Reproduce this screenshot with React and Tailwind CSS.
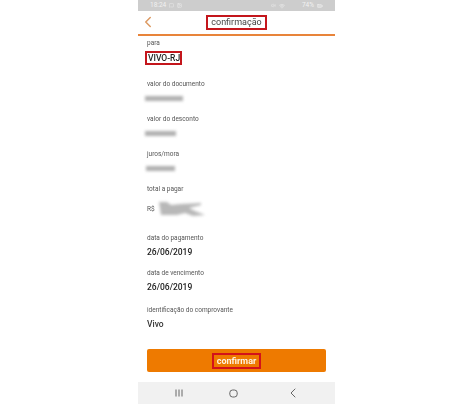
import React from 'react'
import { ChevronLeft, Wifi, Image, MessageSquare, VolumeX, BatteryFull } from 'lucide-react'

function Label({ children }) {
  return <p className="text-[6.5px] leading-[10px] text-[#555]">{children}</p>
}

function Hidden({ w, className = '' }) {
  return <div className={`${w} h-[5px] ${className} bg-[#b0b0b0] blur-[1.5px]`} />
}

function Field({ label, mt, children }) {
  return (
    <div className={mt}>
      <Label>{label}</Label>
      {children}
    </div>
  )
}

export default function App() {
  return (
    <div className="w-[474px] h-[405px] bg-white overflow-hidden font-['Roboto',sans-serif]">
      <div className="ml-[138px] w-[197px] h-[405px] flex flex-col blur-[0.3px]">
        {/* status bar */}
        <div className="h-[11px] bg-[#cdcdcd] flex items-center justify-between pl-[12px] pr-[12px] text-[6.5px] text-[#f2f2f2]">
          <div className="flex items-center gap-[3px]">
            <span>18:24</span>
            <MessageSquare className="w-[5px] h-[5px]" />
            <Image className="w-[5px] h-[5px]" />
          </div>
          <div className="flex items-center gap-[3px]">
            <VolumeX className="w-[5px] h-[5px]" />
            <Wifi className="w-[6px] h-[6px]" />
            <span className="ml-[14px]">74%</span>
            <BatteryFull className="w-[6px] h-[6px]" />
          </div>
        </div>

        {/* header */}
        <div className="h-[25px] border-b-2 border-[#e8843a] flex items-center justify-center relative">
          <ChevronLeft className="absolute left-[1px] top-[2px] w-[18px] h-[18px] text-[#dd9a62]" strokeWidth={2} />
          <span className="border-2 border-[#c4161c] text-[9px] leading-[11px] text-[#444] px-[3px]">confirmação</span>
        </div>

        {/* fields */}
        <div className="flex-1 pl-[9px] pt-[2px]">
          <Label>para</Label>
          <div className="mt-[3px] -ml-[2px] w-fit border-2 border-[#c4161c] text-[8.5px] leading-[10px] font-medium text-[#222] pl-px">VIVO-RJ</div>

          <Field label="valor do documento" mt="mt-[14px]">
            <Hidden w="w-[38px]" className="mt-[7px] -ml-[2px]" />
          </Field>
          <Field label="valor do desconto" mt="mt-[13px]">
            <Hidden w="w-[31px]" className="mt-[7px] -ml-[2px]" />
          </Field>
          <Field label="juros/mora" mt="mt-[13px]">
            <Hidden w="w-[29px]" className="mt-[7px] -ml-[1px]" />
          </Field>
          <Field label="total a pagar" mt="mt-[13px]">
            <div className="mt-[7px] flex items-center gap-[1px]">
              <span className="text-[6.5px] leading-[10px] text-[#555]">R$</span>
              <svg width="50" height="16" viewBox="0 0 50 16" className="blur-[1.5px]">
                <path d="M3 1h8l4 3 10-1 20-1v2l-12 3 6 3 10 4-12 1-8-3-8 2-16 0z" fill="#b8b8b8" />
              </svg>
            </div>
          </Field>
          <Field label="data do pagamento" mt="mt-[16px]">
            <p className="mt-[3px] text-[8.5px] leading-[12px] font-medium text-[#222]">26/06/2019</p>
          </Field>
          <Field label="data de vencimento" mt="mt-[10px]">
            <p className="mt-[3px] text-[8.5px] leading-[12px] font-medium text-[#222]">26/06/2019</p>
          </Field>
          <Field label="identificação do comprovante" mt="mt-[12px]">
            <p className="mt-[3px] text-[8.5px] leading-[12px] font-medium text-[#333]">Vivo</p>
          </Field>
        </div>

        {/* button */}
        <div className="px-[9px] pb-[10px]">
          <div className="h-[23px] rounded-[2px] bg-[#ee7a00] flex items-center justify-center">
            <span className="border-2 border-[#d3121a] text-[9px] leading-[12px] font-bold text-[#fff3e0] px-[3px]">confirmar</span>
          </div>
        </div>

        {/* nav bar */}
        <div className="h-[22px] mb-px bg-[#f1f1f1] flex items-center justify-around px-[14px]">
          <svg width="8" height="8" viewBox="0 0 8 8" stroke="#666" strokeWidth="1" fill="none">
            <path d="M1 .5v7M4 .5v7M7 .5v7" />
          </svg>
          <svg width="9" height="9" viewBox="0 0 9 9" stroke="#666" strokeWidth="1" fill="none">
            <rect x="0.8" y="1" width="7.4" height="7" rx="2.8" />
          </svg>
          <ChevronLeft className="w-[16px] h-[16px] -mr-[3px] text-[#666]" strokeWidth={1.5} />
        </div>
      </div>
    </div>
  )
}
